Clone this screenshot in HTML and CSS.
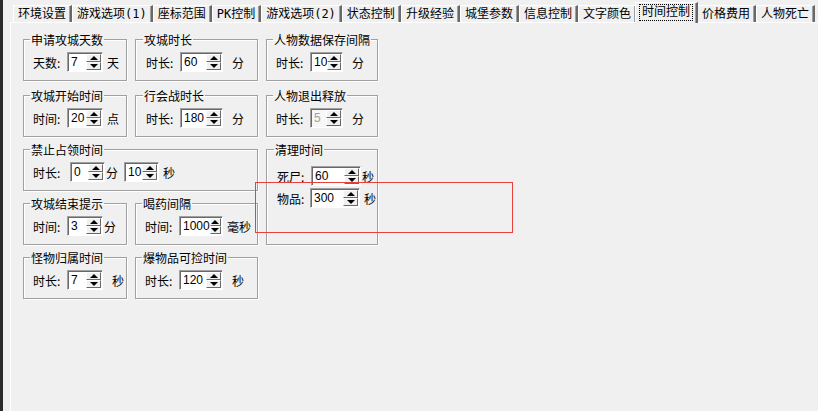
FILE: index.html
```html
<!DOCTYPE html>
<html lang="zh-CN">
<head>
    <meta charset="UTF-8">
    <meta name="viewport" content="width=device-width, initial-scale=1.0">
    <title>时间控制</title>
    <link rel="stylesheet" href="styles.css">
</head>
<body>
<div class="window">
    <div class="edge"></div>
    <div class="main">
        <ul class="tabs">
            <li class="tab">环境设置</li>
            <li class="tab">游戏选项(1)</li>
            <li class="tab">座标范围</li>
            <li class="tab">PK控制</li>
            <li class="tab">游戏选项(2)</li>
            <li class="tab">状态控制</li>
            <li class="tab">升级经验</li>
            <li class="tab">城堡参数</li>
            <li class="tab">信息控制</li>
            <li class="tab">文字颜色</li>
            <li class="tab active"><span class="focus">时间控制</span></li>
            <li class="tab">价格费用</li>
            <li class="tab">人物死亡</li>
        </ul>
        <div class="panel">
            <div class="groups">
                <fieldset class="group">
                    <legend>申请攻城天数</legend>
                    <div class="field">
                        <span class="label">天数:</span>
                        <span class="spin"><span class="value">7</span><span class="arrows"><i class="up"></i><i class="down"></i></span></span>
                        <span class="unit">天</span>
                    </div>
                </fieldset>
                <fieldset class="group mid">
                    <legend>攻城时长</legend>
                    <div class="field">
                        <span class="label">时长:</span>
                        <span class="spin s43"><span class="value">60</span><span class="arrows"><i class="up"></i><i class="down"></i></span></span>
                        <span class="unit far">分</span>
                    </div>
                </fieldset>
                <fieldset class="group">
                    <legend>人物数据保存间隔</legend>
                    <div class="field">
                        <span class="label">时长:</span>
                        <span class="spin s33"><span class="value">10</span><span class="arrows"><i class="up"></i><i class="down"></i></span></span>
                        <span class="unit far">分</span>
                    </div>
                </fieldset>

                <fieldset class="group">
                    <legend>攻城开始时间</legend>
                    <div class="field">
                        <span class="label">时间:</span>
                        <span class="spin"><span class="value">20</span><span class="arrows"><i class="up"></i><i class="down"></i></span></span>
                        <span class="unit">点</span>
                    </div>
                </fieldset>
                <fieldset class="group mid">
                    <legend>行会战时长</legend>
                    <div class="field">
                        <span class="label">时长:</span>
                        <span class="spin s43"><span class="value">180</span><span class="arrows"><i class="up"></i><i class="down"></i></span></span>
                        <span class="unit far">分</span>
                    </div>
                </fieldset>
                <fieldset class="group">
                    <legend>人物退出释放</legend>
                    <div class="field">
                        <span class="label">时长:</span>
                        <span class="spin s33 off"><span class="value">5</span><span class="arrows"><i class="up"></i><i class="down"></i></span></span>
                        <span class="unit far">分</span>
                    </div>
                </fieldset>

                <fieldset class="group span">
                    <legend>禁止占领时间</legend>
                    <div class="field">
                        <span class="label l37">时长:</span>
                        <span class="spin s35"><span class="value">0</span><span class="arrows"><i class="up"></i><i class="down"></i></span></span>
                        <span class="unit near">分</span>
                        <span class="spin s35 gap"><span class="value">10</span><span class="arrows"><i class="up"></i><i class="down"></i></span></span>
                        <span class="unit">秒</span>
                    </div>
                </fieldset>
                <fieldset class="group tall">
                    <legend>清理时间</legend>
                    <div class="field">
                        <span class="label">死尸:</span>
                        <span class="spin s50"><span class="value">60</span><span class="arrows"><i class="up"></i><i class="down"></i></span></span>
                        <span class="unit near">秒</span>
                    </div>
                    <div class="field">
                        <span class="label l33">物品:</span>
                        <span class="spin s50"><span class="value">300</span><span class="arrows"><i class="up"></i><i class="down"></i></span></span>
                        <span class="unit">秒</span>
                    </div>
                </fieldset>

                <fieldset class="group">
                    <legend>攻城结束提示</legend>
                    <div class="field">
                        <span class="label">时间:</span>
                        <span class="spin"><span class="value">3</span><span class="arrows"><i class="up"></i><i class="down"></i></span></span>
                        <span class="unit near">分</span>
                    </div>
                </fieldset>
                <fieldset class="group">
                    <legend>喝药间隔</legend>
                    <div class="field">
                        <span class="label">时间:</span>
                        <span class="spin s44"><span class="value">1000</span><span class="arrows"><i class="up"></i><i class="down"></i></span></span>
                        <span class="unit">毫秒</span>
                    </div>
                </fieldset>

                <fieldset class="group">
                    <legend>怪物归属时间</legend>
                    <div class="field">
                        <span class="label">时长:</span>
                        <span class="spin"><span class="value">7</span><span class="arrows"><i class="up"></i><i class="down"></i></span></span>
                        <span class="unit far">秒</span>
                    </div>
                </fieldset>
                <fieldset class="group">
                    <legend>爆物品可捡时间</legend>
                    <div class="field">
                        <span class="label">时长:</span>
                        <span class="spin s44"><span class="value">120</span><span class="arrows"><i class="up"></i><i class="down"></i></span></span>
                        <span class="unit far">秒</span>
                    </div>
                </fieldset>
            </div>
        </div>
    </div>
    <div class="mark"></div>
</div>
</body>
</html>
```

FILE: styles.css
```css
body {
    margin: 0;
    background-color: #f0f0f0;
    font-family: "Noto Sans CJK SC", sans-serif;
    font-size: 12px;
    color: #000;
}
.window {
    position: relative;
    display: flex;
    height: 411px;
    overflow: hidden;
}
.edge {
    width: 3px;
    background-color: #2b2b2b;
}
.main {
    flex: 1;
    display: flex;
    flex-direction: column;
    padding: 2px 0 0 7px;
}

/* tab strip */
.tabs {
    display: flex;
    list-style: none;
    margin: 0 0 0 3px;
    padding: 0;
    height: 20px;
    font-family: "DejaVu Sans Mono", "Noto Sans CJK SC", monospace;
    white-space: nowrap;
}
.tab {
    margin-top: 3px;
    height: 17px;
    box-sizing: border-box;
    padding: 0 4px;
    line-height: 16px;
    border-top: 1px solid #fff;
    border-left: 1px solid #fff;
    border-right: 2px solid #696969;
    box-shadow: inset -1px 0 0 #a0a0a0;
}
.tab.active {
    position: relative;
    z-index: 1;
    margin: 0 -1px 0 -2px;
    height: 21px;
    padding: 1px 4px 0 4px;
    background-color: #f0f0f0;
}
.focus {
    display: inline-block;
    padding: 0 2px;
    line-height: 15px;
    outline: 1px dotted #000;
}

/* panel */
.panel {
    flex: 1;
    border-top: 1px solid #fff;
    border-left: 1px solid #fff;
    padding: 10px 0 0 12px;
}
.groups {
    display: grid;
    grid-template-columns: 104px 123px 112px;
    grid-template-rows: 50px 48px 48px 48px 48px;
    column-gap: 8px;
    row-gap: 6px;
}
.group {
    margin: 0;
    min-width: 0;
    height: 48px;
    box-sizing: border-box;
    align-self: start;
    padding: 6px 0 0 9px;
    border: 1px solid #a0a0a0;
    box-shadow: 1px 1px 0 #fff, inset 1px 1px 0 #fff;
}
.group.mid {
    padding-left: 10px;
}
.group.span {
    grid-column: span 2;
}
.group.tall {
    grid-row: span 2;
    height: 102px;
    padding: 10px 0 0 10px;
}
legend {
    margin-left: -3px;
    padding: 0 1px;
    line-height: 13px;
}

/* label + spin edit + unit */
.field {
    display: flex;
    align-items: center;
    height: 20px;
    white-space: nowrap;
}
.tall .field + .field {
    margin-top: 2px;
}
.label {
    width: 34px;
    flex: none;
}
.label.l37 {
    width: 37px;
}
.label.l33 {
    width: 33px;
}
.unit {
    margin-left: 4px;
}
.unit.near {
    margin-left: 1px;
}
.unit.far {
    margin-left: 9px;
}
.spin {
    display: flex;
    flex: none;
    width: 36px;
    height: 20px;
    box-sizing: border-box;
    padding: 1px;
    background-color: #fff;
    border: 1px solid;
    border-color: #a0a0a0 #fff #fff #a0a0a0;
    box-shadow: inset 1px 1px 0 #696969;
}
.spin.s33 { width: 33px; }
.spin.s35 { width: 35px; }
.spin.s43 { width: 43px; }
.spin.s44 { width: 44px; }
.spin.s50 { width: 50px; }
.spin.gap {
    margin-left: 6px;
}
.spin.off {
    background-color: #f7f7f7;
    color: #a0a0a0;
}
.value {
    flex: 1;
    padding: 1px 0 0 2px;
    font-family: "Liberation Sans", sans-serif;
    font-size: 12px;
    line-height: 15px;
}
.arrows {
    display: flex;
    flex-direction: column;
    width: 15px;
}
.arrows i {
    flex: 1;
    display: flex;
    align-items: center;
    justify-content: center;
    box-sizing: border-box;
    background-color: #f0f0f0;
    border: 1px solid;
    border-color: #fff #696969 #696969 #fff;
}
.arrows i::after {
    content: "";
    border-left: 4px solid transparent;
    border-right: 4px solid transparent;
}
.arrows .up::after {
    border-bottom: 4px solid #000;
}
.arrows .down::after {
    border-top: 4px solid #000;
}

/* red highlight drawn over the screenshot */
.mark {
    position: absolute;
    left: 255px;
    top: 182px;
    width: 258px;
    height: 51px;
    box-sizing: border-box;
    border: 1px solid #e8413c;
}
```
